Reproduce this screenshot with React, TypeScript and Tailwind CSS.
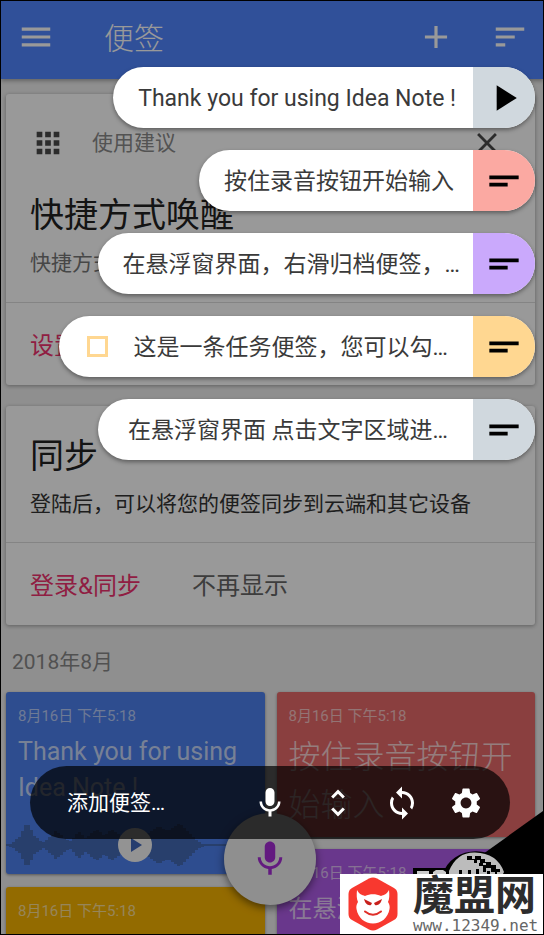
import { ReactNode } from "react";
import {
  MdAdd,
  MdApps,
  MdClose,
  MdMenu,
  MdMic,
  MdPlayArrow,
  MdSettings,
  MdShortText,
  MdSort,
  MdSync,
  MdUnfoldMore,
} from "react-icons/md";

const floatingNotes = [
  { text: "Thank you for using Idea Note !", color: "bg-[#d0d8de]", pad: "pl-[25px] pr-[17px]", audio: true },
  { text: "按住录音按钮开始输入", color: "bg-[#fba9a2]", pad: "pl-[25px] pr-[19px]" },
  { text: "在悬浮窗界面，右滑归档便签，…", color: "bg-[#caa9fc]", pad: "pl-[25px] pr-[13px]" },
  { text: "这是一条任务便签，您可以勾…", color: "bg-[#ffd791]", pad: "pl-[26px] pr-[25px]", task: true },
  { text: "在悬浮窗界面 点击文字区域进…", color: "bg-[#d0d8de]", pad: "pl-[30px] pr-[25px]" },
];

const wave = [
  2, 3, 6, 12, 16, 28, 40, 40, 30, 18, 14, 9, 6, 10, 16, 20, 28, 24, 20, 14, 10, 8, 14, 22, 26, 20, 14, 18, 24, 28, 30,
  26, 20, 22, 28, 30, 26, 22, 18, 16, 16, 20, 18, 20, 18, 16, 18, 24, 28, 32, 36, 36, 32, 30, 30, 34, 38, 42, 40, 34, 28,
  22, 16, 10, 6, 3, 2, 2, 2, 2, 2, 2, 2, 2, 4, 6, 10, 8, 6, 4, 2, 2, 2, 2, 2, 2,
];

const Waveform = () => (
  <svg className="block h-[44px] w-full" viewBox="0 0 258 44" preserveAspectRatio="none" fill="#446ab4" aria-hidden="true">
    {wave.map((h, i) => (
      <rect key={i} x={i * 3} y={22 - h / 2} width={3} height={h} shapeRendering="crispEdges" />
    ))}
  </svg>
);

const Card = ({ children, actions }: { children: ReactNode; actions: ReactNode }) => (
  <section className="rounded-[3px] bg-white shadow-[0_1px_4px_rgba(0,0,0,0.35)]">
    {children}
    <div className="flex h-[83px] items-center gap-[51px] border-t border-[#dcdcdc] px-6 pt-1 text-[24px]">
      {actions}
    </div>
  </section>
);

const Note = ({ color, children }: { color: string; children?: ReactNode }) => (
  <article className={`overflow-hidden rounded-[3px] pt-[14px] text-white/70 shadow-[0_1px_3px_rgba(0,0,0,0.4)] ${color}`}>
    <p className="px-3 text-[15px] leading-5 text-white/60">8月16日 下午5:18</p>
    {children}
  </article>
);

const DevilLogo = () => (
  <svg className="h-[56px] w-[52px] shrink-0" viewBox="0 0 52 56" aria-hidden="true">
    <path
      d="M22 2.5Q26 .5 30 2.5L47 12Q50.500 14 50.500 18V38Q50.500 42 47 44L30 53.500Q26 55.500 22 53.500L5 44Q1.500 42 1.500 38V18Q1.500 14 5 12Z"
      fill="#f8382f"
    />
    <path
      d="M10 14C9.500 19 9.500 23 11 26C9.500 28 9 31 9.500 33C11 42 18 47.500 26 47.500S41 42 42.500 33C43 31 42.500 28 41 26C42.500 23 42.500 19 42 14C40 18 37 19 34 20C29 17.500 23 17.500 18 20C15 19 12 18 10 14Z"
      fill="#fff"
    />
    <path d="M17 23L25 27L24 29C21 30 18 27.500 17 23ZM35 23L27 27L28 29C31 30 34 27.500 35 23Z" fill="#c8201c" />
    <path d="M18 35.500Q26 42 34 35.500" fill="none" stroke="#e0302a" strokeWidth="2" strokeLinecap="round" />
  </svg>
);

const Watermark = () => (
  <div className="absolute right-0 bottom-0 flex flex-col items-end">
    <svg className="block h-[63px] w-[132px]" viewBox="0 0 132 63" aria-hidden="true">
      <path d="M132 0V63H44Z" fill="#000" />
      <path d="M2 57H100V63H2Z" fill="#000" />
      <path d="M32 63A34 30 0 0 1 98 63Z" fill="#000" />
      <path d="M38 60Q46 41 64 41.500Q86 42 93 61L92 63H38Z" fill="#bcbcbc" />
      <path d="M56 45h5v3h3v-3h6v3h4v3h6v3h5v4h4v3H80v-4h-5v4h-3v-6h-4v-3h-5v-3h-7z" fill="#000" />
      <path d="M66 49h3v3h-3zM72 52h3v2h-3z" fill="#bcbcbc" />
      <path d="M48 59h3v4h-3zM57 59h3v4h-3zM65 58h3v5h-3zM76 60h3v3h-3zM84 60h2v3h-2z" fill="#000" />
      <path d="M6 60h12v3H6zM22 61l3-2h7l3 2v2H22z" fill="#ccc" />
    </svg>
    <div className="flex h-[60px] w-[203px] items-center gap-[14px] bg-white pl-[7px]">
      <DevilLogo />
      <div className="flex flex-col text-[#2d2d2d]">
        <span className="text-[41px] leading-[43px] font-bold whitespace-nowrap">魔盟网</span>
        <a href="#site" className="font-['DejaVu_Sans_Mono',monospace] text-[16px] leading-4 text-[#666]">
          www.12349.net
        </a>
      </div>
    </div>
  </div>
);

const App = () => {
  return (
    <div className="relative h-screen overflow-hidden border border-black bg-[#efefef] font-[Roboto,'Noto_Sans_CJK_SC',sans-serif]">
      <header className="flex h-[78px] items-center bg-[#5086ff] pr-[14px] pb-[6px] pl-4 text-white shadow-[0_2px_4px_rgba(0,0,0,0.3)]">
        <button aria-label="菜单">
          <MdMenu size={38} />
        </button>
        <h1 className="ml-[49px] flex-1 pt-[3px] text-[30px] leading-10 font-light">便签</h1>
        <button aria-label="新建">
          <MdAdd size={38} />
        </button>
        <button aria-label="排序" className="ml-9">
          <MdSort size={38} />
        </button>
      </header>

      <main className="pt-[15px] pr-2 pl-[5px]">
        <div className="flex flex-col gap-[21px]">
          <Card actions={<button className="text-[#f0326e]">设置</button>}>
            <div className="px-6 pt-8 pb-[25px]">
              <div className="flex h-[34px] items-center pl-px text-[#4a4a4a]">
                <MdApps size={34} />
                <span className="ml-[27px] flex-1 pt-[2px] text-[21px] text-[#8a8a8a]">使用建议</span>
                <button aria-label="关闭" className="mr-[7px]">
                  <MdClose size={34} />
                </button>
              </div>
              <h2 className="mt-[33px] text-[34px] leading-[44px] text-[#222]">快捷方式唤醒</h2>
              <p className="mt-3 text-[21px] leading-7 text-[#777]">快捷方式唤醒</p>
            </div>
          </Card>

          <Card
            actions={
              <>
                <button className="text-[#f0326e]">登录&amp;同步</button>
                <button className="text-[#666]">不再显示</button>
              </>
            }
          >
            <div className="px-6 pt-7 pb-6">
              <h2 className="text-[34px] leading-[44px] text-[#222]">同步</h2>
              <p className="mt-3 text-[21px] leading-7 text-[#333]">登陆后，可以将您的便签同步到云端和其它设备</p>
            </div>
          </Card>
        </div>

        <h3 className="mt-[25px] mb-[18px] ml-[6px] text-[21px] leading-6 text-[#888]">2018年8月</h3>

        <div className="grid grid-cols-2 items-start gap-3">
          <div className="flex flex-col gap-[13px]">
            <Note color="bg-[#4e80ee]">
              <p className="mt-2 px-3 text-[25px] leading-9">Thank you for using Idea Note !</p>
              <div className="relative mt-[17px] pb-[7px]">
                <Waveform />
                <button
                  aria-label="播放"
                  className="absolute top-[5px] left-[112px] flex size-[34px] items-center justify-center rounded-full bg-[#f5f5f5] text-[#3f66ba]"
                >
                  <MdPlayArrow size={24} />
                </button>
              </div>
            </Note>
            <Note color="bg-[#f6b200]">
              <div className="h-12" />
            </Note>
          </div>
          <div className="flex flex-col gap-3">
            <Note color="bg-[#e76a6a]">
              <p className="mt-[7px] px-3 pb-2 text-[32px] leading-[48px] font-light">按住录音按钮开始输入</p>
            </Note>
            <Note color="bg-[#b05de9]">
              <p className="mt-2 truncate px-3 pb-4 text-[24px] leading-9">在悬浮窗</p>
            </Note>
          </div>
        </div>
      </main>

      <button
        aria-label="录音"
        className="absolute bottom-[29px] left-1/2 flex size-[92px] -translate-x-12 items-center justify-center rounded-full bg-[#eee] text-[#a52cd6] shadow-[0_3px_8px_rgba(0,0,0,0.5)]"
      >
        <MdMic size={42} />
      </button>

      {/* dimmed layer with the floating notes */}
      <div className="absolute inset-0 flex flex-col items-end gap-[22px] bg-black/40 pt-[66px] pr-2">
        {floatingNotes.map((note) => (
          <div
            key={note.text}
            className="flex h-[61px] shrink-0 items-stretch overflow-hidden rounded-full bg-white shadow-[0_2px_4px_rgba(0,0,0,0.4)]"
          >
            {note.task && (
              <input
                type="checkbox"
                aria-label={note.text}
                className="ml-[28px] size-[21px] appearance-none self-center border-[3px] border-[#ffd791]"
              />
            )}
            <button className={`pt-[3px] text-[23px] whitespace-nowrap text-[#3a3a3a] ${note.pad}`}>{note.text}</button>
            <button
              aria-label={note.audio ? "播放" : "打开"}
              className={`flex w-[62px] items-center justify-center text-black ${note.color}`}
            >
              {note.audio ? <MdPlayArrow size={44} /> : <MdShortText size={44} />}
            </button>
          </div>
        ))}

        <div className="mt-auto mr-[25px] mb-[95px] ml-[29px] flex h-[73px] items-center self-stretch rounded-full bg-black/70 pr-[26px] pl-[37px] text-white">
          <button className="flex-1 pt-[3px] text-left text-[21px]">添加便签…</button>
          <div className="flex items-center gap-7">
            <button aria-label="语音" className="mr-1">
              <MdMic size={36} />
            </button>
            <button aria-label="展开">
              <MdUnfoldMore size={36} />
            </button>
            <button aria-label="刷新">
              <MdSync size={36} />
            </button>
            <button aria-label="设置">
              <MdSettings size={36} />
            </button>
          </div>
        </div>
      </div>

      <Watermark />
    </div>
  );
};

export default App;
